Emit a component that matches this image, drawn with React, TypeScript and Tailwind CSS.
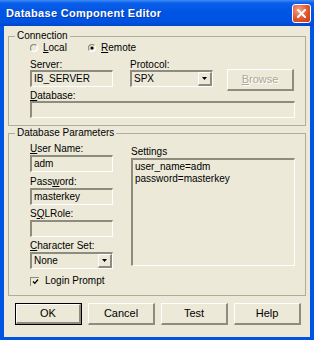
import type { ReactNode } from "react"

// classic win32 bevels on the XP beige face
const FACE = "bg-[#ece9d8]"
const SUNKEN =
  "border-t-2 border-l-2 border-r border-b border-t-[#8e8b7f] border-l-[#8e8b7f] border-r-white border-b-white"
const RAISED =
  "border-t border-l border-r-2 border-b-2 border-t-white border-l-white border-r-[#8e8b7f] border-b-[#8e8b7f]"
const GROUP = "border border-[#b0ad9f] pl-[6px] pr-[10px]"
const LABEL = "h-[12px] text-[10px] leading-[12px] whitespace-nowrap"

function Acc({ text, at }: { text: string; at: number }) {
  return (
    <>
      {text.slice(0, at)}
      <span className="underline underline-offset-[1px]">{text[at]}</span>
      {text.slice(at + 1)}
    </>
  )
}

function Field({ value, className = "" }: { value?: string; className?: string }) {
  return (
    <div className={`h-[17px] ${SUNKEN} ${className} px-[2px] text-[10px] leading-[14px] whitespace-nowrap`}>
      {value}
    </div>
  )
}

function Combo({ value }: { value: string }) {
  return (
    <div className={`flex h-[17px] w-[83px] ${SUNKEN}`}>
      <span className="flex-1 px-[2px] text-[10px] leading-[14px]">{value}</span>
      <span className={`flex w-[14px] items-center justify-center ${RAISED}`}>
        <svg width="5" height="3" viewBox="0 0 5 3">
          <path d="M0 0h5L2.5 3z" fill="#000" />
        </svg>
      </span>
    </div>
  )
}

function Radio({ checked, children }: { checked?: boolean; children: ReactNode }) {
  return (
    <div className="flex items-center gap-[5px]">
      <svg width="8" height="8" viewBox="0 0 8 8">
        <path d="M6.5 1.5A3.5 3.5 0 1 0 1.5 6.5" fill="none" stroke="#8e8b7f" strokeWidth="1.2" />
        <path d="M6.5 1.5A3.5 3.5 0 0 1 1.5 6.5" fill="none" stroke="#fff" strokeWidth="1.2" />
        {checked && <circle cx="4" cy="4" r="1.6" fill="#000" />}
      </svg>
      <span className={LABEL}>{children}</span>
    </div>
  )
}

function Button({ children, isDefault, disabled }: { children: ReactNode; isDefault?: boolean; disabled?: boolean }) {
  const inner = (
    <div
      className={`flex h-full w-full items-center justify-center ${RAISED} text-[11px] ${
        disabled ? "text-[#aca899] [text-shadow:1px_1px_0_#fff]" : "text-black"
      }`}
    >
      {children}
    </div>
  )
  return isDefault ? (
    <div className="h-[22px] w-[67px] border border-black">{inner}</div>
  ) : (
    <div className="h-[22px] w-[67px]">{inner}</div>
  )
}

export default function App() {
  return (
    <div className={`flex h-[340px] w-[314px] flex-col ${FACE} font-['Liberation_Sans',Arial,sans-serif] text-black`}>
      {/* title bar */}
      <div className="flex h-[26px] items-center justify-between bg-[linear-gradient(180deg,#3d8cf7_0%,#0a5ee9_12%,#0055e5_45%,#0053e1_85%,#0046c8_100%)] pl-[6px] pr-[3px]">
        <span className="text-[11px] font-bold tracking-[0.3px] text-white [text-shadow:1px_1px_0_#0b3aa8]">
          Database Component Editor
        </span>
        <div className="flex h-[19px] w-[19px] items-center justify-center rounded-[3px] border border-white bg-[radial-gradient(circle_at_35%_30%,#f3a38a,#e2552c_55%,#c4391a)]">
          <svg width="9" height="9" viewBox="0 0 9 9">
            <path d="M1 1l7 7M8 1L1 8" stroke="#fff" strokeWidth="2" strokeLinecap="square" />
          </svg>
        </div>
      </div>

      {/* dialog body */}
      <div className="flex flex-1 flex-col border-x-4 border-b-[3px] border-[#0054e3] px-[4px]">
        <fieldset className={`mt-[4px] pb-[7px] ${GROUP}`}>
          <legend className="px-[2px] text-[10px] leading-[12px]">Connection</legend>
          <div className="ml-[15px]">
            <div className="flex h-[12px] items-center">
              <div className="w-[58px]">
                <Radio>
                  <Acc text="Local" at={0} />
                </Radio>
              </div>
              <Radio checked>
                <Acc text="Remote" at={0} />
              </Radio>
            </div>

            <div className="mt-[5px] flex h-[31px] items-start">
              <div className="w-[83px]">
                <div className="h-[11px] text-[10px] leading-[11px]">Server:</div>
                <Field value="IB_SERVER" className="w-[83px]" />
              </div>
              <div className="ml-[17px] w-[83px]">
                <div className="h-[11px] text-[10px] leading-[11px]">Protocol:</div>
                <Combo value="SPX" />
              </div>
              <div className="ml-[14px] mt-[10px]">
                <Button disabled>
                  <Acc text="Browse" at={0} />
                </Button>
              </div>
            </div>

            <div className="h-[11px] text-[10px] leading-[11px]">
              <Acc text="Database:" at={0} />
            </div>
            <Field className="w-[265px]" />
          </div>
        </fieldset>

        <fieldset className={`mt-[1px] pb-[8px] ${GROUP}`}>
          <legend className="px-[2px] text-[10px] leading-[12px]">Database Parameters</legend>
          <div className="ml-[15px] flex">
            <div className="flex w-[83px] flex-col">
              <div className={`mt-[4px] ${LABEL}`}>
                <Acc text="User Name:" at={0} />
              </div>
              <Field value="adm" className="w-[83px]" />
              <div className={`mt-[4px] ${LABEL}`}>
                <Acc text="Password:" at={4} />
              </div>
              <Field value="masterkey" className="w-[83px]" />
              <div className={`mt-[3px] ${LABEL}`}>
                <Acc text="SQLRole:" at={1} />
              </div>
              <Field className="w-[83px]" />
              <div className={`mt-[3px] ${LABEL}`}>
                <Acc text="Character Set:" at={0} />
              </div>
              <Combo value="None" />
              <div className="mt-[6px] flex h-[12px] items-center gap-[6px]">
                <div className="flex h-[9px] w-[9px] items-center justify-center border-t border-l border-t-[#8e8b7f] border-l-[#8e8b7f]">
                  <svg width="7" height="7" viewBox="0 0 7 7">
                    <path d="M1 3.5l1.8 1.8L6 1.5" fill="none" stroke="#000" strokeWidth="1.3" />
                  </svg>
                </div>
                <span className={LABEL}>Login Prompt</span>
              </div>
            </div>

            <div className="ml-[18px] flex flex-col">
              <div className={`mt-[7px] ${LABEL}`}>Settings</div>
              <div className={`h-[108px] w-[164px] ${SUNKEN} px-[2px] pt-[1px] text-[10px] leading-[12px]`}>
                <div>user_name=adm</div>
                <div>password=masterkey</div>
              </div>
            </div>
          </div>
        </fieldset>

        <div className="ml-[7px] mt-[7px] flex gap-[6px]">
          <Button isDefault>OK</Button>
          <Button>Cancel</Button>
          <Button>Test</Button>
          <Button>Help</Button>
        </div>
      </div>
    </div>
  )
}
